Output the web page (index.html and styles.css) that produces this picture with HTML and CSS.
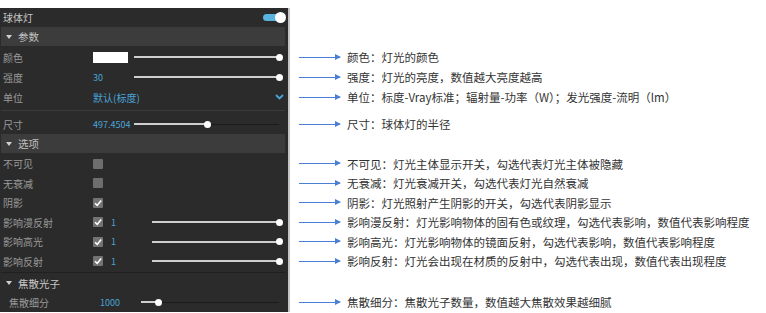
FILE: index.html
```html
<!DOCTYPE html>
<html lang="zh">
<head>
    <meta charset="UTF-8">
    <title>球体灯</title>
    <link rel="stylesheet" href="styles.css">
</head>
<body>
    <div class="page">
        <div class="panel">
            <div class="title-row">
                <span>球体灯</span>
                <div class="toggle"><span class="toggle-knob"></span></div>
            </div>

            <div class="section"><span class="tri"></span>参数</div>
            <div class="row">
                <span class="label">颜色</span>
                <span class="swatch"></span>
                <div class="slider"><span class="fill" style="width:100%"></span><span class="knob"></span><span class="rest"></span></div>
            </div>
            <div class="row">
                <span class="label">强度</span>
                <span class="value w41">30</span>
                <div class="slider"><span class="fill" style="width:100%"></span><span class="knob"></span><span class="rest"></span></div>
            </div>
            <div class="row">
                <span class="label">单位</span>
                <span class="value grow">默认(标度)</span>
                <svg class="chevron" width="9" height="6" viewBox="0 0 9 6"><path d="M1 1 L4.5 4.5 L8 1" fill="none" stroke="#4aa3d8" stroke-width="1.8"/></svg>
            </div>
            <div class="divider"></div>
            <div class="row">
                <span class="label">尺寸</span>
                <span class="value w41">497.4504</span>
                <div class="slider"><span class="fill" style="width:50%"></span><span class="knob"></span><span class="rest"></span></div>
            </div>

            <div class="section"><span class="tri"></span>选项</div>
            <div class="row short">
                <span class="label">不可见</span>
                <span class="check"></span>
            </div>
            <div class="row short">
                <span class="label">无衰减</span>
                <span class="check"></span>
            </div>
            <div class="row short">
                <span class="label">阴影</span>
                <span class="check on"><svg width="10" height="10" viewBox="0 0 10 10"><path d="M2 5.2 L4.2 7.4 L8.2 2.6" fill="none" stroke="#fff" stroke-width="1.6"/></svg></span>
            </div>
            <div class="row short">
                <span class="label">影响漫反射</span>
                <span class="check on"><svg width="10" height="10" viewBox="0 0 10 10"><path d="M2 5.2 L4.2 7.4 L8.2 2.6" fill="none" stroke="#fff" stroke-width="1.6"/></svg></span>
                <span class="value num">1</span>
                <div class="slider"><span class="fill" style="width:100%"></span><span class="knob"></span><span class="rest"></span></div>
            </div>
            <div class="row short">
                <span class="label">影响高光</span>
                <span class="check on"><svg width="10" height="10" viewBox="0 0 10 10"><path d="M2 5.2 L4.2 7.4 L8.2 2.6" fill="none" stroke="#fff" stroke-width="1.6"/></svg></span>
                <span class="value num">1</span>
                <div class="slider"><span class="fill" style="width:100%"></span><span class="knob"></span><span class="rest"></span></div>
            </div>
            <div class="row short">
                <span class="label">影响反射</span>
                <span class="check on"><svg width="10" height="10" viewBox="0 0 10 10"><path d="M2 5.2 L4.2 7.4 L8.2 2.6" fill="none" stroke="#fff" stroke-width="1.6"/></svg></span>
                <span class="value num">1</span>
                <div class="slider"><span class="fill" style="width:100%"></span><span class="knob"></span><span class="rest"></span></div>
            </div>
            <div class="divider dark"></div>

            <div class="section plain"><span class="tri"></span>焦散光子</div>
            <div class="row sub">
                <span class="label">焦散细分</span>
                <span class="value w41">1000</span>
                <div class="slider"><span class="fill" style="width:12%"></span><span class="knob"></span><span class="rest"></span></div>
            </div>
        </div>

        <div class="notes">
            <div class="note"><span class="arrow"></span>颜色：灯光的颜色</div>
            <div class="note"><span class="arrow"></span>强度：灯光的亮度，数值越大亮度越高</div>
            <div class="note"><span class="arrow"></span>单位：标度-Vray标准；辐射量-功率（W）；发光强度-流明（lm）</div>
            <div class="note gap-a"><span class="arrow"></span>尺寸：球体灯的半径</div>
            <div class="note short gap-b"><span class="arrow"></span>不可见：灯光主体显示开关，勾选代表灯光主体被隐藏</div>
            <div class="note short"><span class="arrow"></span>无衰减：灯光衰减开关，勾选代表灯光自然衰减</div>
            <div class="note short"><span class="arrow"></span>阴影：灯光照射产生阴影的开关，勾选代表阴影显示</div>
            <div class="note short"><span class="arrow"></span>影响漫反射：灯光影响物体的固有色或纹理，勾选代表影响，数值代表影响程度</div>
            <div class="note short"><span class="arrow"></span>影响高光：灯光影响物体的镜面反射，勾选代表影响，数值代表影响程度</div>
            <div class="note short"><span class="arrow"></span>影响反射：灯光会出现在材质的反射中，勾选代表出现，数值代表出现程度</div>
            <div class="note gap-c"><span class="arrow"></span>焦散细分：焦散光子数量，数值越大焦散效果越细腻</div>
        </div>
    </div>
</body>
</html>
```

FILE: styles.css
```css
* {
    margin: 0;
    box-sizing: border-box;
}

body {
    background: #fff;
    font-family: 'Noto Sans CJK SC', 'Noto Sans', sans-serif;
}

.page {
    display: flex;
    align-items: flex-start;
    padding-top: 8px;
}

/* dark property panel */
.panel {
    width: 290px;
    height: 304px;
    background: #2b2b2b;
    border-right: 2px solid #c4c4c4;
    padding: 0 3px 0 1px;
    font-size: 10px;
    color: #9a9a9a;
}

.title-row {
    height: 19px;
    display: flex;
    align-items: center;
    justify-content: space-between;
    padding-left: 2px;
    color: #c8c8c8;
}

.toggle {
    width: 22px;
    height: 7px;
    border-radius: 4px;
    background: #5ab3df;
    display: flex;
    align-items: center;
    justify-content: flex-end;
}

.toggle-knob {
    width: 11px;
    height: 11px;
    border-radius: 50%;
    background: #fff;
    margin-right: -1px;
}

.section {
    height: 19px;
    margin-bottom: 1px;
    background: #3c3c3c;
    color: #c0c0c0;
    display: flex;
    align-items: center;
    padding-left: 5px;
    font-size: 10.5px;
}

.section.plain {
    background: transparent;
    height: 18px;
    margin-bottom: 0;
    color: #c8c8c8;
}

.tri {
    width: 0;
    height: 0;
    border-top: 4px solid #d0d0d0;
    border-left: 3px solid transparent;
    border-right: 3px solid transparent;
    margin-right: 6px;
}

.row {
    height: 20px;
    display: flex;
    align-items: center;
}

.row.short {
    height: 19.5px;
}

.row.sub .label {
    padding-left: 8px;
}

.label {
    width: 92px;
    padding-left: 2px;
    flex: none;
}

.value {
    color: #4aa3d8;
    flex: none;
    font-size: 9px;
}

.value.w41 {
    width: 41px;
}

.value.grow {
    flex: 1;
    font-size: 10px;
}

.value.num {
    width: 49px;
    padding-left: 8px;
}

.row.sub .value {
    width: 48px;
    padding-left: 7px;
}

.swatch {
    width: 35px;
    height: 11px;
    background: #fff;
    margin-right: 6px;
    flex: none;
}

.chevron {
    margin-right: 1px;
}

.slider {
    flex: 1;
    display: flex;
    align-items: center;
    height: 8px;
    margin-right: 6px;
}

.fill {
    height: 2px;
    background: #cfcfcf;
    flex: none;
}

.rest {
    flex: 1;
    height: 1px;
    background: #1b1b1b;
}

.knob {
    width: 7px;
    height: 7px;
    border-radius: 50%;
    background: #fff;
    flex: none;
    margin-left: -3px;
}

.check {
    width: 10px;
    height: 10px;
    background: #6e6e6e;
    border-radius: 1px;
    flex: none;
    display: flex;
}

.check.on {
    background: #737373;
}

.divider {
    height: 1px;
    margin: 3px 0;
    background: #3b3b3b;
}

.divider.dark {
    margin: 1px 0;
    background: #202020;
}

/* annotations */
.notes {
    padding-top: 39px;
    padding-left: 9px;
    font-size: 11.5px;
    color: #333;
}

.note {
    height: 20px;
    display: flex;
    align-items: center;
    white-space: nowrap;
}

.note.short {
    height: 19.5px;
}

.note.gap-a {
    margin-top: 7px;
}

.note.gap-b {
    margin-top: 20px;
}

.note.gap-c {
    margin-top: 21px;
}

.arrow {
    width: 41px;
    height: 1px;
    background: #4a7fd4;
    margin-right: 7px;
    position: relative;
    flex: none;
}

.arrow::after {
    content: "";
    position: absolute;
    right: -1px;
    top: -3px;
    border-left: 6px solid #4a7fd4;
    border-top: 3.5px solid transparent;
    border-bottom: 3.5px solid transparent;
}
```
